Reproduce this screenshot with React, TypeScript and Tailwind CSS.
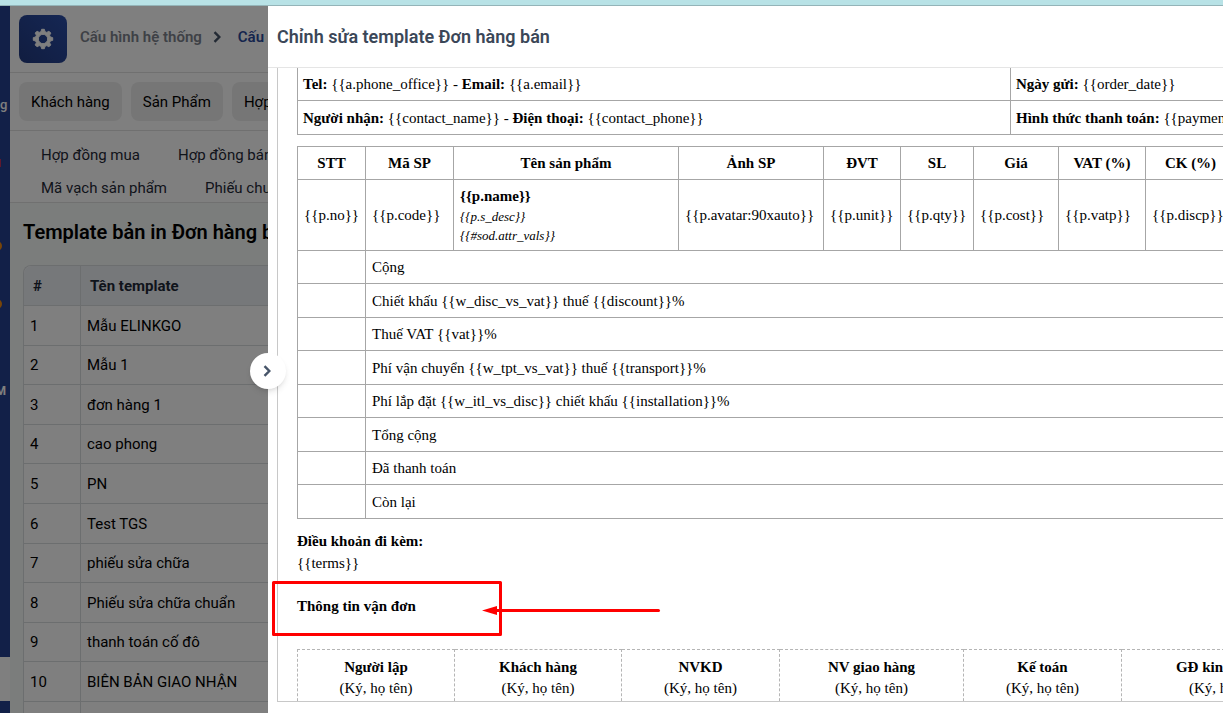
import React from "react";

const tabs = ["Khách hàng", "Sản Phẩm", "Hợp đồng"];

const subTabRows = [
  ["Hợp đồng mua", "Hợp đồng bán"],
  ["Mã vạch sản phẩm", "Phiếu chuyển"],
];

const templates = [
  "Mẫu ELINKGO",
  "Mẫu 1",
  "đơn hàng 1",
  "cao phong",
  "PN",
  "Test TGS",
  "phiếu sửa chữa",
  "Phiếu sửa chữa chuẩn",
  "thanh toán cố đô",
  "BIÊN BẢN GIAO NHẬN",
  "",
];

const columns = [
  { title: "STT", value: "{{p.no}}", width: "w-[68px]" },
  { title: "Mã SP", value: "{{p.code}}", width: "w-[88px]" },
  { title: "Tên sản phẩm", value: "", width: "w-[225px]" },
  { title: "Ảnh SP", value: "{{p.avatar:90xauto}}", width: "w-[145px]" },
  { title: "ĐVT", value: "{{p.unit}}", width: "w-[77px]" },
  { title: "SL", value: "{{p.qty}}", width: "w-[73px]" },
  { title: "Giá", value: "{{p.cost}}", width: "w-[85px]" },
  { title: "VAT (%)", value: "{{p.vatp}}", width: "w-[87px]" },
  { title: "CK (%)", value: "{{p.discp}}", width: "w-[90px]" },
  { title: "", value: "", width: "w-[94px]" },
];

const totals = [
  "Cộng",
  "Chiết khấu {{w_disc_vs_vat}} thuế {{discount}}%",
  "Thuế VAT {{vat}}%",
  "Phí vận chuyển {{w_tpt_vs_vat}} thuế {{transport}}%",
  "Phí lắp đặt {{w_itl_vs_disc}} chiết khấu {{installation}}%",
  "Tổng cộng",
  "Đã thanh toán",
  "Còn lại",
];

const signers = [
  { title: "Người lập", width: "w-[157px]" },
  { title: "Khách hàng", width: "w-[167px]" },
  { title: "NVKD", width: "w-[158px]" },
  { title: "NV giao hàng", width: "w-[184px]" },
  { title: "Kế toán", width: "w-[158px]" },
  { title: "GĐ kinh doanh", width: "w-[208px]" },
];

const gearOutline = Array.from({ length: 8 })
  .flatMap((_, tooth) =>
    [
      [-15, 7.6],
      [-8, 9.8],
      [8, 9.8],
      [15, 7.6],
    ].map(([offset, radius]) => {
      const angle = ((tooth * 45 + offset) * Math.PI) / 180;
      return `${(12 + radius * Math.cos(angle)).toFixed(2)} ${(12 + radius * Math.sin(angle)).toFixed(2)}`;
    }),
  )
  .join("L");

function GearIcon() {
  return (
    <svg viewBox="0 0 24 24" className="size-6" aria-hidden="true">
      <path
        fill="#fff"
        fillRule="evenodd"
        stroke="#fff"
        strokeWidth="1"
        strokeLinejoin="round"
        d={`M${gearOutline}ZM12 7.3A4.7 4.7 0 1 0 12 16.7A4.7 4.7 0 1 0 12 7.3Z`}
      />
    </svg>
  );
}

function Chevron({ className }: { className: string }) {
  return (
    <svg viewBox="0 0 8 12" className={className} fill="none" stroke="currentColor" strokeWidth="2.4" aria-hidden="true">
      <path d="M1.5 1.2L6.3 6L1.5 10.8" />
    </svg>
  );
}

function Sidebar() {
  return (
    <nav className="flex w-[10px] shrink-0 flex-col overflow-hidden bg-[#254090] text-[13px] font-medium text-white">
      <span className="mt-[88px] flex h-[22px] items-center self-start">g</span>
      <span className="mt-[43px] h-2 w-px bg-[#c0305a]" />
      <span className="mt-[74px] -ml-2 size-2.5 rounded-full bg-[#f08a10]" />
      <span className="mt-12 -ml-2 size-2.5 rounded-full bg-[#f08a10]" />
      <span className="mt-[71px] flex h-[22px] w-[6px] items-center justify-end self-start text-xs font-bold">M</span>
      <span className="mt-auto mb-3 h-11 shrink-0 bg-white" />
    </nav>
  );
}

function SettingsPage() {
  return (
    <main className="flex min-w-0 flex-1 flex-col overflow-hidden whitespace-nowrap bg-[#f6fbf9]">
      <header className="flex h-[67px] shrink-0 items-center gap-[13px] border-b border-[#e0e0e0] bg-white px-[9px]">
        <div className="flex size-12 shrink-0 items-center justify-center rounded-lg bg-linear-to-tr from-[#223a80] to-[#2b4ea8]">
          <GearIcon />
        </div>
        <nav className="flex items-center gap-[11px] pb-1 text-[15px] font-semibold">
          <a href="#settings" className="text-[#7d828c]">Cấu hình hệ thống</a>
          <Chevron className="h-3 w-2 text-[#475569]" />
          <a href="#print" className="ml-1.5 text-[#2b4a9b]">Cấu hình in</a>
        </nav>
      </header>
      <div className="flex h-[58px] shrink-0 items-center gap-[9px] border-b border-[#e0e0e0] bg-white px-[9px]">
        {tabs.map((tab) => (
          <button key={tab} type="button" className="h-[39px] rounded-lg bg-[#ededed] px-3 pt-0.5 text-[15px] text-black">
            {tab}
          </button>
        ))}
      </div>
      <div className="flex h-[72px] shrink-0 flex-col justify-end gap-[9px] border-b border-[#e0e0e0] bg-white px-[31px] pb-[2px]">
        {subTabRows.map((row) => (
          <div key={row[0]} className="flex h-6 items-center gap-[38px] text-[15px] text-[#1f2937]">
            {row.map((label) => (
              <a key={label} href="#template">{label}</a>
            ))}
          </div>
        ))}
      </div>
      <section className="px-[13px] pt-[11px]">
        <h1 className="flex h-9 items-center text-xl font-semibold text-black">Template bản in Đơn hàng bán</h1>
        <div className="mt-[15px] w-[640px] rounded-tl-lg border-t border-l border-[#d9dcdf] bg-white">
          <table className="w-full table-fixed border-separate border-spacing-0 text-left text-[15px] text-black">
            <thead>
              <tr className="h-10 bg-[#edf0f5] text-[#1f2937]">
                <th className="w-[57px] rounded-tl-lg border-r border-b border-[#d9dcdf] px-[9px] pt-0.5 font-bold">#</th>
                <th className="border-b border-[#d9dcdf] px-[9px] pt-0.5 font-bold">Tên template</th>
              </tr>
            </thead>
            <tbody>
              {templates.map((name, index) => (
                <tr key={index} className="h-10 nth-[5n+2]:h-[39px] nth-[5n+4]:h-[39px]">
                  <td className="border-r border-b border-[#d9dcdf] px-[6px] pt-px">{name ? index + 1 : ""}</td>
                  <td className="border-b border-[#d9dcdf] px-[6px] pt-px">{name}</td>
                </tr>
              ))}
            </tbody>
          </table>
        </div>
      </section>
    </main>
  );
}

function PrintDocument() {
  return (
    <div className="w-[1033px] font-['Liberation_Serif','Times_New_Roman',serif] text-[15px] leading-[21px] text-black">
      <table className="w-full table-fixed border-collapse">
        <tbody>
          <tr className="h-8">
            <td className="w-[713px] border border-t-0 border-[#a6a6a6] px-[5px] pt-0.5">
              <b>Tel:</b> {"{{a.phone_office}}"} - <b>Email:</b> {"{{a.email}}"}
            </td>
            <td className="border border-t-0 border-[#a6a6a6] px-[5px] pt-0.5">
              <b>Ngày gửi:</b> {"{{order_date}}"}
            </td>
          </tr>
          <tr className="h-[34px]">
            <td className="border border-[#a6a6a6] px-[5px] pt-0.5">
              <b>Người nhận:</b> {"{{contact_name}}"} - <b>Điện thoại:</b> {"{{contact_phone}}"}
            </td>
            <td className="border border-[#a6a6a6] px-[5px] pt-0.5">
              <b>Hình thức thanh toán:</b> {"{{payment_method}}"}
            </td>
          </tr>
        </tbody>
      </table>

      <table className="mt-[11px] w-full table-fixed border-collapse">
        <colgroup>
          {columns.map((column, index) => (
            <col key={index} className={column.width} />
          ))}
        </colgroup>
        <thead>
          <tr className="h-[33px]">
            {columns.map((column, index) => (
              <th key={index} className="border border-[#a6a6a6] pt-0.5">{column.title}</th>
            ))}
          </tr>
        </thead>
        <tbody>
          <tr className="h-[71px]">
            {columns.map((column, index) =>
              index === 2 ? (
                <td key={index} className="border border-[#a6a6a6] px-[6px] pt-0.5">
                  <b className="block">{"{{p.name}}"}</b>
                  <i className="block text-[13px] leading-[19px]">{"{{p.s_desc}}"}</i>
                  <i className="block text-[13px] leading-[19px]">{"{{#sod.attr_vals}}"}</i>
                </td>
              ) : (
                <td key={index} className="border border-[#a6a6a6] px-[6px] pt-0.5">{column.value}</td>
              ),
            )}
          </tr>
        </tbody>
        <tbody>
          {totals.map((label) => (
            <tr key={label} className="odd:h-[33px] even:h-[34px]">
              <td className="border border-[#a6a6a6]" />
              <td colSpan={9} className="border border-[#a6a6a6] px-[6px] pt-0.5">{label}</td>
            </tr>
          ))}
        </tbody>
      </table>

      <div className="mt-[11px] leading-[22px]">
        <b className="block">Điều khoản đi kèm:</b>
        <p>{"{{terms}}"}</p>
      </div>
      <p className="mt-[22px] font-bold">Thông tin vận đơn</p>

      <table className="mt-8 w-full table-fixed border-collapse text-center">
        <tbody>
          <tr className="h-[120px] align-top">
            {signers.map((signer) => (
              <td key={signer.title} className={`${signer.width} border border-dashed border-[#b5b5b5] pt-[7px]`}>
                <b className="block">{signer.title}</b>
                (Ký, họ tên)
              </td>
            ))}
          </tr>
        </tbody>
      </table>
    </div>
  );
}

function Annotation() {
  return (
    <svg
      viewBox="0 0 390 56"
      className="pointer-events-none absolute top-[575px] left-1 h-14 w-[390px]"
      aria-hidden="true"
    >
      <rect x="1.5" y="1.5" width="227" height="52" fill="none" stroke="#f00" strokeWidth="3" strokeLinejoin="round" />
      <path d="M218 29.5H386.5" stroke="#f00" strokeWidth="3" strokeLinecap="round" />
      <path d="M210 29.5L225 25V34Z" fill="#f00" />
    </svg>
  );
}

export default function App() {
  return (
    <div className="flex h-screen flex-col overflow-hidden bg-white font-[Roboto,sans-serif]">
      <div className="h-[6px] shrink-0 border-b border-[#94b4b8] bg-[#b8e2e6]" />
      <div className="relative flex min-h-0 flex-1">
        <div className="relative flex w-[268px] shrink-0 overflow-hidden">
          <Sidebar />
          <SettingsPage />
          <div className="absolute inset-0 bg-black/50" />
        </div>

        <section className="relative flex min-w-0 flex-1 flex-col bg-white" aria-label="Chỉnh sửa template">
          <header className="flex h-[62px] shrink-0 items-center border-b border-[#e5e5e5] px-[9px]">
            <h2 className="text-lg font-semibold text-[#3b4758]">Chỉnh sửa template Đơn hàng bán</h2>
          </header>
          <div className="mb-[11px] ml-[9px] min-h-0 flex-1 overflow-hidden border-b border-l border-[#c8c8c8] pl-[19px]">
            <PrintDocument />
          </div>
          <button
            type="button"
            aria-label="Đóng"
            className="absolute top-[347px] -left-[18px] flex size-9 items-center justify-center rounded-full bg-white text-[#475569] shadow-md"
          >
            <Chevron className="mr-0.5 h-3 w-2" />
          </button>
          <Annotation />
        </section>
      </div>
    </div>
  );
}
